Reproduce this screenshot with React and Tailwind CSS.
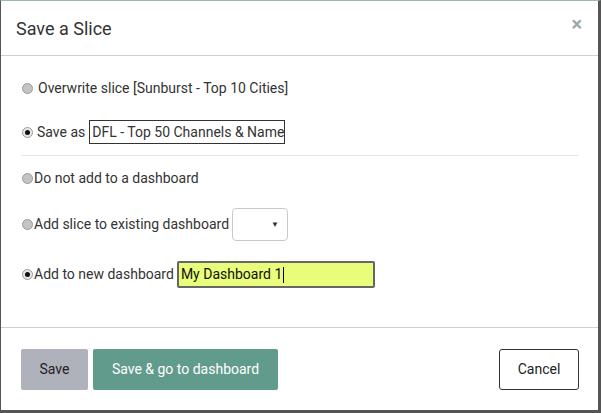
import React from "react";

function Radio({ checked }) {
    return (
        <span
            className={`inline-flex items-center justify-center w-[11px] h-[11px] rounded-full border border-[#9a9a9a] shrink-0 ${
                checked ? "bg-[#e8e8e8]" : "bg-[#c4c4c4]"
            }`}
        >
            {checked && <span className="w-[5px] h-[5px] rounded-full bg-[#111]" />}
        </span>
    );
}

export default function App() {
    return (
        <div
            className="w-[601px] h-[413px] bg-white border-l border-r-[3px] border-b-[3px] border-t border-l-[#555] border-r-[#555] border-b-[#555] border-t-[#9cb8b0] flex flex-col text-[#333] overflow-hidden"
            style={{ fontFamily: "Roboto, 'Liberation Sans', sans-serif" }}
        >
            {/* Header */}
            <div className="h-[55px] shrink-0 flex items-center justify-between pl-[15px] pr-[16px] border-b border-[#d0d0d0]">
                <h4 className="text-[18px] text-[#333] pt-px">Save a Slice</h4>
                <span className="text-[20px] font-bold text-[#9aa8a8] leading-none -mt-[8px]">×</span>
            </div>

            {/* Body */}
            <div className="flex-1 pl-[21px] pr-[19px] text-[14px]">
                <div className="mt-[22px] h-[20px] flex items-center">
                    <Radio />
                    <span className="ml-[5px]">Overwrite slice [Sunburst - Top 10 Cities]</span>
                </div>

                <div className="mt-[22px] h-[24px] flex items-center">
                    <Radio checked />
                    <span className="ml-[4px]">Save as</span>
                    <div className="ml-[4px] w-[196px] h-[24px] border border-[#333] flex items-center pl-[2px] whitespace-nowrap overflow-hidden">
                        DFL - Top 50 Channels &amp; Name
                    </div>
                </div>

                <div className="mt-[11px] h-px bg-[#e5e5e5]" />

                <div className="mt-[12px] h-[20px] flex items-center">
                    <Radio />
                    <span className="ml-px">Do not add to a dashboard</span>
                </div>

                <div className="mt-[20px] h-[33px] flex items-center">
                    <Radio />
                    <span className="ml-px">Add slice to existing dashboard</span>
                    <div className="ml-[3px] w-[56px] h-[33px] border border-[#c8c8c8] rounded-[4px] flex items-center justify-end pr-[8px]">
                        <span className="text-[8px] text-[#333]">▼</span>
                    </div>
                </div>

                <div className="mt-[20px] h-[27px] flex items-center">
                    <Radio checked />
                    <span className="ml-px">Add to new dashboard</span>
                    <div className="ml-[3px] w-[198px] h-[27px] border-2 border-[#666] bg-[#e9fd7a] rounded-[2px] flex items-center pl-[2px] text-[#111]">
                        My Dashboard 1<span className="w-px h-[16px] bg-black ml-px" />
                    </div>
                </div>
            </div>

            {/* Footer */}
            <div className="h-[83px] shrink-0 border-t border-[#d0d0d0] flex items-start justify-between pl-[20px] pr-[19px] pt-[21px] text-[14px]">
                <div className="flex gap-[5px]">
                    <button className="w-[67px] h-[41px] bg-[#afb1bb] rounded-[2px] text-[#222]">Save</button>
                    <button className="w-[185px] h-[41px] bg-[#619b8b] rounded-[2px] text-white">
                        Save &amp; go to dashboard
                    </button>
                </div>
                <button className="w-[80px] h-[41px] border border-[#333] rounded-[3px] bg-white text-[#222]">Cancel</button>
            </div>
        </div>
    );
}
